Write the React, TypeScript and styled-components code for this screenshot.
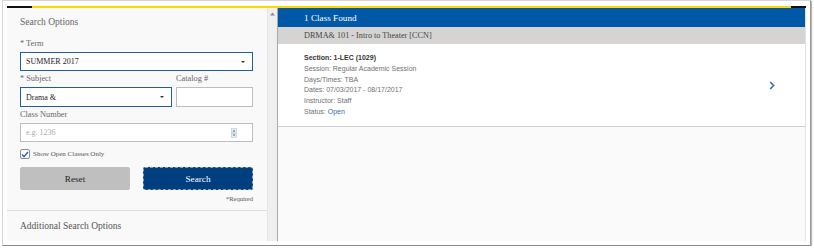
import styled, { createGlobalStyle } from 'styled-components';

const GlobalStyle = createGlobalStyle`
  html, body {
    margin: 0;
    padding: 0;
    background: #ffffff;
  }
`;

const serif = `"Liberation Serif", "DejaVu Serif", serif`;
const sans = `"Liberation Sans", Arial, sans-serif`;

const Frame = styled.div`
  box-sizing: border-box;
  width: 809px;
  height: 246px;
  margin-left: 2px;
  padding: 5px 4px 4px 4px;
  background: #ffffff;
  border: 1px solid #d6d6d6;
  border-right-color: #9a9a9a;
  border-bottom-color: #8c8c8c;
  box-shadow: 1px 1px 1px #b8b8b8;
  display: flex;
  flex-direction: column;
`;

const Stripe = styled.div`
  display: flex;
  height: 2px;
  flex-shrink: 0;
`;

const StripeBit = styled.div<{ $color: string; $width?: number }>`
  background: ${p => p.$color};
  ${p => (p.$width ? `width: ${p.$width}px;` : 'flex: 1;')}
`;

const Body = styled.div`
  flex: 1;
  display: flex;
  min-height: 0;
`;

const LeftPanel = styled.div`
  width: 260px;
  background: #f9f9f9;
  display: flex;
  flex-direction: column;
`;

const Form = styled.div`
  padding: 8px 14px 0 13px;
  display: flex;
  flex-direction: column;
`;

const PanelTitle = styled.div`
  font-family: ${serif};
  font-size: 9.5px;
  line-height: 12px;
  color: #666;
`;

const Field = styled.div<{ $grow?: boolean; $top?: number }>`
  display: flex;
  flex-direction: column;
  margin-top: ${p => p.$top ?? 3}px;
  ${p => (p.$grow ? 'flex: 1;' : '')}
`;

const Label = styled.div`
  font-family: ${serif};
  font-size: 8.3px;
  line-height: 10px;
  color: #666;
  margin-bottom: 3px;
`;

const Row = styled.div`
  display: flex;
  gap: 4px;
`;

const Control = styled.div<{ $focus?: boolean; $h?: number; $w?: number }>`
  box-sizing: border-box;
  height: ${p => p.$h ?? 19}px;
  ${p => (p.$w ? `width: ${p.$w}px;` : '')}
  background: #ffffff;
  border: 1px solid ${p => (p.$focus ? '#1d5fa7' : '#bdbdbd')};
  display: flex;
  align-items: center;
  padding: 0 5px;
  font-family: ${serif};
  font-size: 8px;
  color: #222;
`;

const ControlText = styled.span<{ $muted?: boolean }>`
  flex: 1;
  color: ${p => (p.$muted ? '#a9a9a9' : '#222')};
`;

const Caret = styled.span`
  width: 0;
  height: 0;
  margin-right: 2px;
  border-left: 2px solid transparent;
  border-right: 2px solid transparent;
  border-top: 2px solid #333;
`;

const CheckRow = styled.label`
  display: flex;
  align-items: center;
  gap: 3px;
  margin-top: 7px;
  height: 10px;
  font-family: ${serif};
  font-size: 7px;
  color: #555;
`;

const CheckBox = styled.span`
  box-sizing: border-box;
  width: 10px;
  height: 10px;
  background: #fff;
  border: 1px solid #8e8e8e;
  border-radius: 2px;
  display: flex;
  align-items: center;
  justify-content: center;
`;

const Buttons = styled.div`
  display: flex;
  justify-content: space-between;
  margin-top: 8px;
`;

const Button = styled.button<{ $primary?: boolean }>`
  box-sizing: border-box;
  width: 110px;
  height: 23px;
  border-radius: 2px;
  font-family: ${serif};
  font-size: 9.2px;
  cursor: pointer;
  padding: 0;
  background: ${p => (p.$primary ? '#003f7f' : '#bfbfbf')};
  color: ${p => (p.$primary ? '#ffffff' : '#222')};
  border: 1px ${p => (p.$primary ? 'dashed #8ea3c0' : 'solid #bfbfbf')};
`;

const Required = styled.div`
  text-align: right;
  margin-top: 5px;
  font-family: ${serif};
  font-size: 6.5px;
  line-height: 8px;
  color: #555;
`;

const Divider = styled.div`
  height: 1px;
  background: #dedede;
  margin-top: 7px;
`;

const MoreOptions = styled.div`
  padding: 9px 13px 0;
  font-family: ${serif};
  font-size: 9.5px;
  line-height: 12px;
  color: #555;
`;

const ScrollTrack = styled.div`
  width: 9px;
  background: #efefef;
  border-left: 1px solid #e6e6e6;
  border-right: 1px solid #a9a9a9;
  box-sizing: content-box;
  display: flex;
  justify-content: center;
  padding-top: 4px;
`;

const RightPanel = styled.div`
  flex: 1;
  background: #fafafa;
  border-right: 1px solid #e3e3e3;
  display: flex;
  flex-direction: column;
`;

const ResultsBar = styled.div`
  height: 19px;
  background: #0058a7;
  color: #fff;
  font-family: ${serif};
  font-size: 9.2px;
  display: flex;
  align-items: center;
  padding-left: 26px;
`;

const CourseBar = styled.div`
  height: 17px;
  background: #d5d4d3;
  color: #444;
  font-family: ${serif};
  font-size: 8.2px;
  display: flex;
  align-items: center;
  padding-left: 26px;
`;

const SectionCard = styled.div`
  background: #fff;
  border-bottom: 1px solid #cfcfcf;
  padding: 9px 30px 8px 26px;
  display: flex;
  align-items: center;
`;

const SectionInfo = styled.div`
  flex: 1;
  font-family: ${sans};
  font-size: 7px;
  line-height: 10.8px;
  color: #707070;
`;

const SectionTitle = styled.div`
  font-weight: bold;
  color: #333;
`;

const StatusOpen = styled.span`
  color: #3a6db0;
`;

const Spinner = () => (
  <svg width="6" height="10" viewBox="0 0 6 10">
    <rect x="0.5" y="0.5" width="5" height="4" fill="#eef1f6" stroke="#b9c3d1" strokeWidth="0.6" />
    <rect x="0.5" y="5.5" width="5" height="4" fill="#eef1f6" stroke="#b9c3d1" strokeWidth="0.6" />
    <path d="M1.6 3.4 L3 1.8 L4.4 3.4 Z" fill="#4f6d9a" />
    <path d="M1.6 6.6 L3 8.2 L4.4 6.6 Z" fill="#4f6d9a" />
  </svg>
);

const App = () => (
  <>
    <GlobalStyle />
    <Frame>
      <Stripe>
        <StripeBit $color="#111" $width={25} />
        <StripeBit $color="#fdd800" />
        <StripeBit $color="#111" $width={15} />
      </Stripe>
      <Body>
        <LeftPanel>
          <Form>
            <PanelTitle>Search Options</PanelTitle>
            <Field $top={11}>
              <Label>* Term</Label>
              <Control $focus>
                <ControlText>SUMMER 2017</ControlText>
                <Caret />
              </Control>
            </Field>
            <Row>
              <Field $grow>
                <Label>* Subject</Label>
                <Control $focus $h={20}>
                  <ControlText>Drama &amp;</ControlText>
                  <Caret />
                </Control>
              </Field>
              <Field>
                <Label>Catalog #</Label>
                <Control $h={20} $w={77} />
              </Field>
            </Row>
            <Field>
              <Label>Class Number</Label>
              <Control>
                <ControlText $muted>e.g. 1236</ControlText>
                <Spinner />
                <span style={{ width: 10 }} />
              </Control>
            </Field>
            <CheckRow>
              <CheckBox>
                <svg width="8" height="7" viewBox="0 0 8 7">
                  <path d="M1 3.6 L3 5.6 L7 1" fill="none" stroke="#2464b4" strokeWidth="1.4" />
                </svg>
              </CheckBox>
              Show Open Classes Only
            </CheckRow>
            <Buttons>
              <Button>Reset</Button>
              <Button $primary>Search</Button>
            </Buttons>
            <Required>*Required</Required>
          </Form>
          <Divider />
          <MoreOptions>Additional Search Options</MoreOptions>
        </LeftPanel>
        <ScrollTrack>
          <svg width="5" height="4" viewBox="0 0 5 4">
            <path d="M0 3.5 L2.5 0.5 L5 3.5 Z" fill="#8a8a8a" />
          </svg>
        </ScrollTrack>
        <RightPanel>
          <ResultsBar>1 Class Found</ResultsBar>
          <CourseBar>DRMA&amp; 101 - Intro to Theater [CCN]</CourseBar>
          <SectionCard>
            <SectionInfo>
              <SectionTitle>Section: 1-LEC (1029)</SectionTitle>
              <div>Session: Regular Academic Session</div>
              <div>Days/Times: TBA</div>
              <div>Dates: 07/03/2017 - 08/17/2017</div>
              <div>Instructor: Staff</div>
              <div>
                Status: <StatusOpen>Open</StatusOpen>
              </div>
            </SectionInfo>
            <svg width="6" height="9" viewBox="0 0 6 9">
              <path d="M1.2 1 L4.6 4.5 L1.2 8" fill="none" stroke="#2a6bbd" strokeWidth="1.5" />
            </svg>
          </SectionCard>
        </RightPanel>
      </Body>
    </Frame>
  </>
);

export default App;
